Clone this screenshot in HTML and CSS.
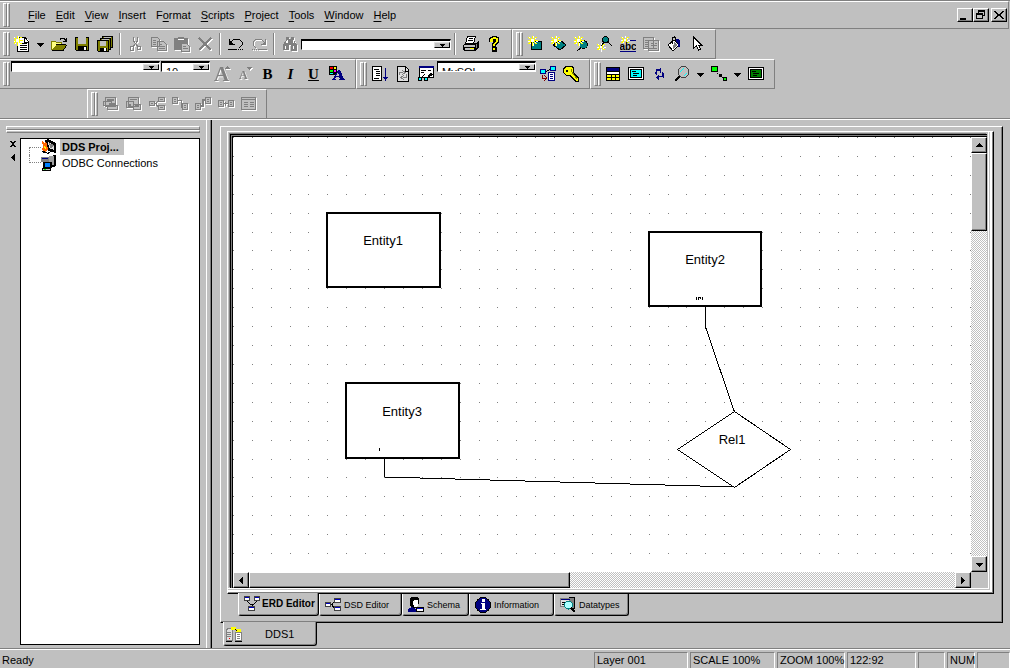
FILE: index.html
```html
<!DOCTYPE html>
<html lang="en">
<head>
<meta charset="utf-8">
<title>DDS1</title>
<link rel="stylesheet" href="styles.css">
</head>
<body>
<svg class="sprite" aria-hidden="true">
  <symbol id="star" viewBox="0 0 16 16"><path d="M0 1h2v1h1v1h1V0h1v3h1V2h1V1h2v1H8v1H7v1h3v1H7v1h1v1h1v1H7V7H6V6H5v4H4V6H3v1H2v1H0V7h1V6h1V5H0V4h2V3H1V2H0z" fill="#ff0"/><path d="M1 1h1v1H1zM5 0h1v2H5zM7 2h1v1H7zM3 3h3v3H3zM0 5h2v1H0zM8 5h2v1H8zM2 7h1v1H2zM5 7h1v3H5zM7 6h1v1H7z" fill="#fff"/></symbol>
  <symbol id="new" viewBox="0 0 16 16"><path d="M4 1h7l4 4v11H4z" fill="#fff"/><path d="M5 1.500h6l3.500 4v10h-11V8M10.500 2v4h4" fill="none" stroke="#000"/><path d="M8 7.500h5M6 9.500h7M6 11.500h7M6 13.500h7" stroke="#000"/><use href="#star" x="-1" y="0" width="16" height="16"/></symbol>
  <symbol id="open" viewBox="0 0 16 16"><path d="M0 5h4l1 1h6v3H5l-4 5H0z" fill="#ffff80"/><path d="M0.500 14V5.500h4l1 1h5V9" fill="none" stroke="#808000"/><path d="M1 14l4-5h11l-4 5z" fill="#808000"/><path d="M1 14.500h11l4-5.500M5 8.500h10" fill="none" stroke="#000"/><path d="M9 3.500l1-1h3l2 2M15.500 2v3H12" fill="none" stroke="#000"/></symbol>
  <symbol id="save" viewBox="0 0 16 16"><path d="M1 1h14v14H2l-1-1z" fill="#000"/><path d="M2 2h12v12H2z" fill="#808000"/><path d="M4 1h8v7H4z" fill="#c0c0c0"/><path d="M4 10h9v5H4z" fill="#000"/><path d="M10 11h2v3h-2z" fill="#fff"/></symbol>
  <symbol id="saveall" viewBox="0 0 16 16"><path d="M5 0h11v12H5z" fill="#000"/><path d="M6 1h9v10H6z" fill="#808000"/><path d="M7 1h7v3H7z" fill="#c0c0c0"/><path d="M3 2h11v12H3z" fill="#000"/><path d="M4 3h9v10H4z" fill="#808000"/><path d="M5 3h7v3H5z" fill="#c0c0c0"/><path d="M0 4h12v12H1l-1-1z" fill="#000"/><path d="M1 5h10v10H1z" fill="#808000"/><path d="M3 5h6v5H3z" fill="#c0c0c0"/><path d="M3 12h7v3H3z" fill="#000"/><path d="M7 12h2v3H7z" fill="#fff"/></symbol>
  <symbol id="cut" viewBox="0 0 16 16"><path d="M5.500 1v4l4 5M9.500 1v4l-4 5" fill="none" stroke="#808080"/><path d="M2.500 10.500h3v4h-3zM9.500 10.500h3v3h-3z" fill="none" stroke="#808080"/></symbol>
  <symbol id="copy" viewBox="0 0 16 16"><path d="M.5 1.500h6l2 2v7h-8zM6.500 5.500h6l3 3v6h-9z" fill="#c0c0c0" stroke="#808080"/><path d="M2 4.500h3M2 6.500h3M2 8.500h3M8 8.500h3M8 10.500h6M8 12.500h6" stroke="#808080"/></symbol>
  <symbol id="paste" viewBox="0 0 16 16"><path d="M0 2h4V1h6v1h4v12H0z" fill="#808080"/><path d="M4 3h6v1H4z" fill="#fff"/><path d="M7.500 7.500h5l3 3v5h-8z" fill="#c0c0c0" stroke="#808080"/><path d="M9 10.500h3M9 12.500h5" stroke="#808080"/></symbol>
  <symbol id="delete" viewBox="0 0 16 16"><path d="M2 2l12 12M14 2L2 14" stroke="#808080" stroke-width="2"/></symbol>
  <symbol id="undo" viewBox="0 0 16 16"><path d="M1.500 3v5h5M2 7l4-4h5l3 3v3l-3 3M0 13.500h9M10 13.500h1M12 13.500h1M14 13.500h1" fill="none" stroke="#000"/><path d="M1 4v5h5z"/></symbol>
  <symbol id="redo" viewBox="0 0 16 16"><path d="M14.500 3v5h-5M14 7l-4-4H5L2 6v3l3 3M7 13.500h9M5 13.500h1M3 13.500h1M1 13.500h1" fill="none" stroke="#808080"/><path d="M15 4v5h-5z" fill="#808080"/></symbol>
  <symbol id="find" viewBox="0 0 16 16"><path d="M4 1h3v2h2V1h3v3l3 5v6h-6V9H7v5H1V9l3-5z" fill="#808080"/><path d="M5 4h1v3H4zM11 4h1v3h-1zM3 10h1v3H3zM11 10h1v3h-1z" fill="#fff"/></symbol>
  <symbol id="print" viewBox="0 0 16 16"><path d="M3 7h10l3-2v7l-4 3H1l-1-2V9z" fill="#000"/><path d="M4.500 .5h8l-2 7h-8z" fill="#fff" stroke="#000"/><path d="M6 2.500h4M5 4.500h5" stroke="#000"/><path d="M1 9h11v2H1zM2 12h9v2H2z" fill="#c0c0c0"/><path d="M13 8h1v4h-1z" fill="#808080"/><path d="M7 12h4v1H7z" fill="#ff0"/></symbol>
  <symbol id="help" viewBox="0 0 16 16"><path d="M4 1h2V0h5v1h2v6h-1v1h-1v1h-1v2H6V7h1V6H3V2h1zM6 11h5v5H6z"/><path d="M5 2h2V1h3v1h2v4h-1v1h-1v1H9v2H7V8h1V7h1V6h1V3H7v3H4V3h1zM7 12h2v2H7z" fill="#ff0"/></symbol>
  <symbol id="entity" viewBox="0 0 16 16"><path d="M3.500 5.500h10v8h-10z" fill="#008080" stroke="#000"/><use href="#star" width="16" height="16" x="0" y="0"/></symbol>
  <symbol id="relation" viewBox="0 0 16 16"><path d="M2 9l7-5 6 5-6 5z" fill="#008080" stroke="#000"/><use href="#star" width="16" height="16"/></symbol>
  <symbol id="attribute" viewBox="0 0 16 16"><path d="M3 15l6-5" stroke="#000"/><circle cx="9.500" cy="8.500" r="4" fill="#008080" stroke="#000"/><use href="#star" width="16" height="16"/></symbol>
  <symbol id="link" viewBox="0 0 16 16"><path d="M8 4L4 11M9 4l6 6" stroke="#000"/><circle cx="8.500" cy="3.500" r="3" fill="#008080" stroke="#000"/><use href="#star" x="0" y="7" width="14" height="14"/></symbol>
  <symbol id="abc" viewBox="0 0 16 16"><path d="M8 4.500h8M0 15.500h16" stroke="#000080"/><use href="#star" x="1" width="14" height="14"/><text x="8" y="14" class="abc">abc</text></symbol>
  <symbol id="pages" viewBox="0 0 16 16"><path d="M.5 1.500h10v11H.5zM5.500 4.500h10v10h-10z" fill="#c0c0c0" stroke="#808080"/><path d="M2 4.500h7M2 6.500h4M2 8.500h3M2 10.500h3M8 7.500h2M12 7.500h2M8 9.500h6M8 12.500h6" stroke="#808080"/></symbol>
  <symbol id="bucket" viewBox="0 0 16 16"><path d="M2 9l6-5 5 5-6 6z" fill="#fff" stroke="#000"/><path d="M8 6l4 3-5 4z" fill="#808080"/><path d="M6.500 8V2l2-1 1 1v3" fill="none" stroke="#000"/><path d="M10 3h2l2 2v6h-2V8l-2-2z" fill="#000080"/></symbol>
  <symbol id="pointer" viewBox="0 0 16 16"><path d="M4.500 1v11l3-2 2 4 2-1-2-4h3z" fill="#fff" stroke="#000"/></symbol>
  <symbol id="grow" viewBox="0 0 16 16"><text x="0" y="15" class="serif-a">A</text><path d="M11 3l2.500-3L16 3z" fill="#808080"/></symbol>
  <symbol id="shrink" viewBox="0 0 16 16"><text x="2" y="13" class="serif-b">A</text><path d="M10 1h5l-2.500 3z" fill="#808080"/></symbol>
  <symbol id="color" viewBox="0 0 16 16"><path d="M0 0h8v9H0z"/><path d="M1 1h3v2H1z" fill="red"/><path d="M5 1h2v2H5z" fill="#ff0"/><path d="M1 4h3v2H1z" fill="#0f0"/><path d="M5 4h2v2H5z" fill="#f0f"/><path d="M1 7h3v1H1z" fill="#0ff"/><path d="M9 4h2l4 9h1v1h-6v-1h1l-1-2H7l-1 2h1v1H3v-1h1zM9 6l-2 4h3z" fill="#000080" fill-rule="evenodd"/></symbol>
  <symbol id="sort" viewBox="0 0 16 16"><path d="M.5.5h9v14h-9z" fill="#fff" stroke="#000"/><path d="M2 3.500h5M4 5.500h4M4 7.500h4M4 9.500h4M2 12.500h5" stroke="#000"/><path d="M13 2h1v9h2l-2.500 4-2.500-4h2z" fill="#000080"/></symbol>
  <symbol id="refresh" viewBox="0 0 16 16"><path d="M2.500.5h8l3 3v12h-11z" fill="#dfdfdf" stroke="#000"/><path d="M10 1v4h4" fill="none" stroke="#000"/><path d="M4.500 9V6.500H8M7 4l3 2.500L7 9M11.500 8v3H8M9 9l-3 2.500L9 14" fill="none" stroke="#808080"/></symbol>
  <symbol id="preview" viewBox="0 0 16 16"><path d="M1.500.5h14v11h-14z" fill="#fff" stroke="#000"/><path d="M1 0h15v2H1z" fill="#000080"/><path d="M3 4.500h5M3 6.500h3M10 4.500h3M3 12l4-4M9 12l4-5 2 2" stroke="#000"/><path d="M.5 11.500h3v3h-3zM6.500 11.500h3v3h-3z" fill="#0ff" stroke="#000"/></symbol>
  <symbol id="generate" viewBox="0 0 16 16"><path d="M5 6l6-3" stroke="#000"/><path d="M.5 3.500h5v4h-5zM10.500.5h5v4h-5z" fill="#0ff" stroke="#000080"/><path d="M8.500 6.500h6v8h-6z" fill="#fff" stroke="#000080"/><path d="M10 8.500h3M10 10.500h3M10 12.500h3" stroke="#000080"/><path d="M2.500 9v3h4M4 9l3 3-3 3" fill="none" stroke="#800000"/></symbol>
  <symbol id="key" viewBox="0 0 16 16"><path d="M2 0h7l2 2v4l5 6v4h-4l-2-2-3-4H3L0 7V3z" fill="#000"/><path d="M3 1h5l2 2v4l5 6v2h-2L8 9H4L1 7V4z" fill="#ff0"/><path d="M8 3l1 3 5 7" fill="none" stroke="#808000"/><path d="M3 4h2v2H3z"/></symbol>
  <symbol id="table" viewBox="0 0 16 16"><path d="M1 1h14v14H1z" fill="#000"/><path d="M2 2h12v3H2z" fill="#000080"/><path d="M2 6h12v2H2z" fill="#fff"/><path d="M2 9h12v5H2z" fill="#ff0"/><path d="M2 11.500h12M6 9v5M10 9v5" stroke="#000"/></symbol>
  <symbol id="screen" viewBox="0 0 16 16"><path d="M.5 1.500h15v12H.5z" fill="#fff" stroke="#000"/><path d="M2.500 3.500h11v8h-11z" fill="#0ff" stroke="#000"/><path d="M4 5.500h4M5 7.500h6M5 9.500h4" stroke="#000"/></symbol>
  <symbol id="screen2" viewBox="0 0 16 16"><path d="M.5 1.500h15v12H.5z" fill="#fff" stroke="#000"/><path d="M2.500 3.500h11v8h-11z" fill="#008000" stroke="#000"/><path d="M4 5.500h4M5 7.500h6M5 9.500h4" stroke="#000"/></symbol>
  <symbol id="cycle" viewBox="0 0 16 16"><path d="M5 3h4V2h1v5H9V5H6v4H5V8H4V6h1zM11 6h1v1h1v5h-1v-1H8v3H7v-1H6v-1H5v-1h1v-1h1V9h1v1h3z" fill="#000080"/></symbol>
  <symbol id="zoom" viewBox="0 0 16 16"><path d="M1 15l5-5" stroke="#000" stroke-width="2"/><circle cx="9.500" cy="6" r="5.500" fill="#c0c0c0" stroke="#404040"/><path d="M6 6l4-4M10 10l3-3" stroke="#0ff"/></symbol>
  <symbol id="nodes" viewBox="0 0 16 16"><path d="M.5.500h6v5h-6z" fill="#0f0" stroke="#000"/><path d="M6 7h1v1H6zM8 8h3v3H8zM11 11h1v1h-1z"/><path d="M12.500 11.500h3v3h-3z" fill="#0f0" stroke="#000"/></symbol>
  <symbol id="stack1" viewBox="0 0 16 16"><path d="M2.500 1.500h10v9h-10zM.5 5.500h8v4h-8zM4.500 9.500h10v4h-10z" fill="#c0c0c0" stroke="#808080"/><path d="M4 3h7v2H4zM6 7h6v3H6z" fill="#808080"/></symbol>
  <symbol id="stack2" viewBox="0 0 16 16"><path d="M2.500 1.500h10v9h-10zM.5 5.500h7v6h-7zM7.500 8.500h7v5h-7z" fill="#c0c0c0" stroke="#808080"/><path d="M4 3h7v1H4zM2 8h3v2H2zM9 8h4v3H9z" fill="#808080"/></symbol>
  <symbol id="tree1" viewBox="0 0 16 16"><path d="M5 7.500h2l3-4M7 8l3 4" fill="none" stroke="#808080"/><path d="M.5 5.500h5v4h-5zM9.500 1.500h6v4h-6zM9.500 9.500h6v4h-6z" fill="#c0c0c0" stroke="#808080"/><path d="M2 7.500h2M11 3.500h3M11 11.500h3" stroke="#808080"/></symbol>
  <symbol id="down" viewBox="0 0 16 16"><path d="M6 4h3v7h2" fill="none" stroke="#808080"/><path d="M.5 1.500h5v6h-5zM10.500 7.500h5v6h-5z" fill="#c0c0c0" stroke="#808080"/><path d="M2 3.500h2M2 5.500h2M12 9.500h2M12 11.500h2" stroke="#808080"/></symbol>
  <symbol id="up" viewBox="0 0 16 16"><path d="M5 10h3V4h2" fill="none" stroke="#808080" stroke-width="2"/><path d="M.5 7.500h5v6h-5zM10.500 1.500h5v6h-5z" fill="#c0c0c0" stroke="#808080"/><path d="M2 9.500h2M2 11.500h2M12 3.500h2M12 5.500h2" stroke="#808080"/></symbol>
  <symbol id="side" viewBox="0 0 16 16"><path d="M5 7.500h6M7.500 6v4" stroke="#808080"/><path d="M.5 4.500h5v6h-5zM10.500 4.500h5v6h-5z" fill="#c0c0c0" stroke="#808080"/><path d="M2 6.500h2M2 8.500h2M12 6.500h2M12 8.500h2" stroke="#808080"/></symbol>
  <symbol id="list" viewBox="0 0 16 16"><path d="M.5 1.500h14v12H.5z" fill="#c0c0c0" stroke="#808080"/><path d="M0 3h15M3 6.500h4M9 6.500h4M3 8.500h4M9 8.500h4M3 10.500h4M9 10.500h4" stroke="#808080"/></symbol>
  <symbol id="erd" viewBox="0 0 16 16"><path d="M3 5l3 3h4l3-3M8 8v3" fill="none" stroke="#000"/><path d="M.5.5h5v4h-5zM10.500.5h5v4h-5zM4.500 10.500h6v4h-6z" fill="#fff" stroke="#404040"/><path d="M1 1h4v1H1zM11 1h4v1h-4zM5 11h5v1H5z" fill="#0000c0"/></symbol>
  <symbol id="dsd" viewBox="0 0 16 16"><path d="M5 7.500h2l3-4M7 8l3 4" fill="none" stroke="#000"/><path d="M.5 5.500h5v4h-5zM9.500 1.500h6v4h-6zM9.500 9.500h6v4h-6z" fill="#fff" stroke="#404040"/><path d="M1 6h4v1H1zM10 2h5v1h-5zM10 10h5v1h-5z" fill="#0000c0"/></symbol>
  <symbol id="schema" viewBox="0 0 16 16"><path d="M2 1l2-1h5l2 2v4l-2 4-2 1H4L2 9z"/><path d="M6 3h4v5l-2 2H6L5 6z" fill="#fff"/><path d="M0 15v-3l4-2 4 2v3z" fill="#000080"/><path d="M8.500 10.500h7v4h-7z" fill="#fff" stroke="#000"/><path d="M9 11h6v1H9z" fill="#0000c0"/></symbol>
  <symbol id="info" viewBox="0 0 16 16"><circle cx="8" cy="8" r="7.500" fill="#000080" stroke="#000"/><path d="M7 2h3v3H7zM6 6h4v6h1v1H5v-1h2V7H6z" fill="#fff"/></symbol>
  <symbol id="types" viewBox="0 0 16 16"><path d="M9.500.5h5v11h-5z" fill="#808080" stroke="#000"/><path d="M.5 1.500h9v8h-9z" fill="#dfdfdf" stroke="#808080"/><path d="M1 2h9v1H1z" fill="#000080"/><path d="M2 5.500h3M2 7.500h3" stroke="#000"/><circle cx="8.500" cy="8" r="4" fill="#aff" stroke="#008080"/><path d="M11 11l4 4" stroke="#000" stroke-width="2"/></symbol>
  <symbol id="project" viewBox="0 0 16 16"><path d="M4 1l3-1 8 4v10l-8-2z"/><path d="M7 3l6 3v5L8 9z" fill="#dfdfdf"/><path d="M8 4l5 2-3 4z" fill="#808080"/><path d="M1 2l3 3 1-3 2 8-2 3-4-2 1-3z" fill="#f60"/><path d="M3 7l2 1v3L3 9z" fill="#ff0"/><path d="M1 12l3 1M2 14l4-1M6 15l3-2" stroke="#000"/></symbol>
  <symbol id="odbc" viewBox="0 0 16 16"><path d="M9 1l6-1v10l-2 2H8z"/><path d="M8 1h5v9H8z" fill="#a0a0a0"/><path d="M0 2h8v5H0z" fill="#808080"/><path d="M1 3h6v1H1z" fill="#000080"/><path d="M2 7h9v6H2z"/><path d="M4 8h5v4H4z" fill="#0080ff"/><path d="M1 13h9v3H1z" fill="#000"/><path d="M2 14h7v1H2z" fill="#c0c0c0"/><path d="M3 14h2v1H3z" fill="#0f0"/></symbol>
  <symbol id="server" viewBox="0 0 16 16"><path d="M.5 3.500l2-1h4v12h-6z" fill="#dfdfdf" stroke="#808080"/><path d="M1 6.500h4M1 8.500h4M1 10.500h4" stroke="#808080"/><path d="M3 12h1v1H3z" fill="red"/><path d="M9.500 6.500h6v8h-6z" fill="#fff" stroke="#808080"/><path d="M11 8.500h3M11 10.500h3M11 12.500h3" stroke="#808080"/><path d="M5 1h5v2h5v3h-5V4H5z" fill="#ff0"/><path d="M9 3l2 2M0 15.500h6M9 15.500h7" stroke="#000"/></symbol>
  <symbol id="ax" viewBox="0 0 8 8"><path d="M1 3h7v1H1zM2 4h5v1H2zM3 5h3v1H3zM4 6h1v1H4z"/></symbol>
  <symbol id="as" viewBox="0 0 8 8"><path d="M2 3h5v1H2zM3 4h3v1H3zM4 5h1v1H4z"/></symbol>
  <symbol id="au" viewBox="0 0 8 8"><path d="M4 2h1v1H4zM3 3h3v1H3zM2 4h5v1H2zM1 5h7v1H1z"/></symbol>
  <symbol id="al" viewBox="0 0 8 8"><path d="M2 4h1v1H2zM3 3h1v3H3zM4 2h1v5H4zM5 1h1v7H5z"/></symbol>
  <symbol id="ar" viewBox="0 0 8 8"><path d="M5 4h1v1H5zM4 3h1v3H4zM3 2h1v5H3zM2 1h1v7H2z"/></symbol>
</svg>

<header>
  <nav class="menubar">
    <i class="grip"></i>
    <div class="menus">
      <button><u>F</u>ile</button><button><u>E</u>dit</button><button><u>V</u>iew</button><button><u>I</u>nsert</button><button>F<u>o</u>rmat</button><button><u>S</u>cripts</button><button><u>P</u>roject</button><button><u>T</u>ools</button><button><u>W</u>indow</button><button><u>H</u>elp</button>
    </div>
    <div class="winbuttons">
      <button aria-label="Minimize"><svg viewBox="0 0 12 12"><path d="M1 9h6v2H1z"/></svg></button>
      <button aria-label="Restore"><svg viewBox="0 0 12 12"><path d="M3 1h7v6H8V6h1V3H4v1H3zM1 4h7v6H1zM2 6v3h5V6z" fill-rule="evenodd"/></svg></button>
      <button class="close" aria-label="Close"><svg viewBox="0 0 12 12"><path d="M1 2h2v1h1v1h1v1h2V4h1V3h1V2h2v1h-1v1H9v1H8v2h1v1h1v1h1v1H9V9H8V8H7V7H5v1H4v1H3v1H1V9h1V8h1V7h1V5H3V4H2V3H1z"/></svg></button>
    </div>
  </nav>

  <div class="row">
    <div class="band wide-standard">
      <i class="grip"></i>
      <button class="tool" aria-label="New"><svg><use href="#new"/></svg></button>
      <button class="drop" aria-label="New options"><svg><use href="#ax"/></svg></button>
      <button class="tool" aria-label="Open"><svg><use href="#open"/></svg></button>
      <button class="tool" aria-label="Save"><svg><use href="#save"/></svg></button>
      <button class="tool" aria-label="Save all"><svg><use href="#saveall"/></svg></button>
      <i class="sep"></i>
      <button class="tool off" aria-label="Cut"><svg><use href="#cut"/></svg></button>
      <button class="tool off" aria-label="Copy"><svg><use href="#copy"/></svg></button>
      <button class="tool off" aria-label="Paste"><svg><use href="#paste"/></svg></button>
      <button class="tool off" aria-label="Delete"><svg><use href="#delete"/></svg></button>
      <i class="sep"></i>
      <button class="tool" aria-label="Undo"><svg><use href="#undo"/></svg></button>
      <button class="tool off" aria-label="Redo"><svg><use href="#redo"/></svg></button>
      <i class="sep"></i>
      <button class="tool off" aria-label="Find"><svg><use href="#find"/></svg></button>
      <label class="combo combo-find"><select aria-label="Find text"><option></option></select><i class="knob"><svg><use href="#as"/></svg></i></label>
      <i class="sep"></i>
      <button class="tool" aria-label="Print"><svg><use href="#print"/></svg></button>
      <button class="tool" aria-label="Help"><svg><use href="#help"/></svg></button>
    </div>
    <div class="band wide-insert">
      <i class="grip"></i>
      <button class="tool" aria-label="Entity"><svg><use href="#entity"/></svg></button>
      <button class="tool" aria-label="Relationship"><svg><use href="#relation"/></svg></button>
      <button class="tool" aria-label="Attribute"><svg><use href="#attribute"/></svg></button>
      <button class="tool" aria-label="Link"><svg><use href="#link"/></svg></button>
      <button class="tool" aria-label="Label"><svg><use href="#abc"/></svg></button>
      <button class="tool off" aria-label="Pages"><svg><use href="#pages"/></svg></button>
      <button class="tool" aria-label="Fill"><svg><use href="#bucket"/></svg></button>
      <button class="tool" aria-label="Select"><svg><use href="#pointer"/></svg></button>
    </div>
  </div>

  <div class="row">
    <div class="band wide-font">
      <i class="grip"></i>
      <label class="combo high combo-font"><select aria-label="Font"><option></option></select><i class="knob"><svg><use href="#as"/></svg></i></label>
      <label class="combo high combo-size"><select aria-label="Font size"><option>10</option></select><i class="knob"><svg><use href="#as"/></svg></i></label>
      <button class="tool off" aria-label="Grow font"><svg><use href="#grow"/></svg></button>
      <button class="tool off" aria-label="Shrink font"><svg><use href="#shrink"/></svg></button>
      <button class="tool letter"><b>B</b></button>
      <button class="tool letter"><b><em>I</em></b></button>
      <button class="tool letter"><b><u>U</u></b></button>
      <button class="tool" aria-label="Font colour"><svg><use href="#color"/></svg></button>
    </div>
    <div class="band wide-data">
      <i class="grip"></i>
      <button class="tool" aria-label="Sort"><svg><use href="#sort"/></svg></button>
      <button class="tool" aria-label="Refresh"><svg><use href="#refresh"/></svg></button>
      <button class="tool" aria-label="Preview"><svg><use href="#preview"/></svg></button>
      <label class="combo high combo-db"><select aria-label="Database"><option>MySQL</option></select><i class="knob"><svg><use href="#as"/></svg></i></label>
      <button class="tool" aria-label="Generate"><svg><use href="#generate"/></svg></button>
      <button class="tool" aria-label="Key"><svg><use href="#key"/></svg></button>
    </div>
    <div class="band wide-view">
      <i class="grip"></i>
      <button class="tool" aria-label="Table"><svg><use href="#table"/></svg></button>
      <button class="tool" aria-label="Screen"><svg><use href="#screen"/></svg></button>
      <button class="tool" aria-label="Cycle"><svg><use href="#cycle"/></svg></button>
      <button class="tool" aria-label="Zoom"><svg><use href="#zoom"/></svg></button>
      <button class="drop" aria-label="Zoom options"><svg><use href="#ax"/></svg></button>
      <button class="tool" aria-label="Nodes"><svg><use href="#nodes"/></svg></button>
      <button class="drop" aria-label="Node options"><svg><use href="#ax"/></svg></button>
      <button class="tool" aria-label="Full screen"><svg><use href="#screen2"/></svg></button>
    </div>
  </div>

  <div class="row last">
    <div class="band wide-layout">
      <i class="grip"></i>
      <button class="tool off" aria-label="Bring to front"><svg><use href="#stack1"/></svg></button>
      <button class="tool off" aria-label="Send to back"><svg><use href="#stack2"/></svg></button>
      <button class="tool off" aria-label="Tree"><svg><use href="#tree1"/></svg></button>
      <button class="tool off" aria-label="Step down"><svg><use href="#down"/></svg></button>
      <button class="tool off" aria-label="Step up"><svg><use href="#up"/></svg></button>
      <button class="tool off" aria-label="Side by side"><svg><use href="#side"/></svg></button>
      <button class="tool off" aria-label="List"><svg><use href="#list"/></svg></button>
    </div>
  </div>
</header>

<main>
  <aside>
    <div class="hgrip"></div>
    <div class="dock">
      <div class="dockbuttons">
        <button aria-label="Close panel"><svg viewBox="0 0 8 8"><path d="M1 1h2v1h2V1h2v1H6v1H5v2h1v1h1v1H5V6H3v1H1V6h1V5h1V3H2V2H1z"/></svg></button>
        <button aria-label="Collapse panel"><svg><use href="#al"/></svg></button>
      </div>
      <ul class="tree">
        <li><i class="branch"></i><svg><use href="#project"/></svg><b>DDS Proj...</b></li>
        <li><i class="branch end"></i><svg><use href="#odbc"/></svg><span>ODBC Connections</span></li>
      </ul>
    </div>
  </aside>

  <section class="workspace">
    <div class="outer">
      <div class="inner">
        <div class="frame">
          <svg class="canvas" role="img" aria-label="Entity relationship diagram">
            <defs><pattern id="dots" x="75" y="113" width="189" height="227" patternUnits="userSpaceOnUse">
              <path d="M0 .5h189M0 19.500h189M0 38.500h189M0 57.500h189M0 76.500h189M0 95.500h189M0 114.500h189M0 133.500h189M0 152.500h189M0 171.500h189M0 190.500h189M0 209.500h189" stroke="#808080" stroke-dasharray="1 18 1 18 1 18 1 18 1 18 1 18 1 18 1 18 1 18 1 17"/>
            </pattern></defs>
            <rect width="100%" height="100%" fill="url(#dots)"/>
            <g fill="#fff" stroke="#000">
              <path d="M472.500 170v20l29 85M151.500 322v18l350 10" fill="none"/>
              <path d="M501.500 274.500l56 38-56 38-57-38z"/>
              <g stroke-width="2">
                <rect x="94" y="76" width="113" height="74"/>
                <rect x="416" y="95" width="112" height="74"/>
                <rect x="113" y="246" width="113" height="75"/>
              </g>
            </g>
            <path d="M146 311h1v3h-1zM463 160h1v3h-1zM465 160h3v1h-3zM465 161h1v2h-1zM467 161h1v1h-1zM469 160h1v3h-1z"/>
            <g class="names"><text x="150" y="108">Entity1</text><text x="472" y="127">Entity2</text><text x="169" y="279">Entity3</text><text x="499" y="307">Rel1</text></g>
          </svg>
          <div class="vbar"><button aria-label="Scroll up"><svg><use href="#au"/></svg></button><div class="thumb"></div><button aria-label="Scroll down"><svg><use href="#ax"/></svg></button></div>
          <div class="hbar"><button aria-label="Scroll left"><svg><use href="#al"/></svg></button><div class="thumb"></div><button aria-label="Scroll right"><svg><use href="#ar"/></svg></button></div>
        </div>
      </div>
      <div class="tabs">
        <button class="tab tab-erd active"><svg><use href="#erd"/></svg>ERD Editor</button>
        <button class="tab tab-dsd"><svg><use href="#dsd"/></svg>DSD Editor</button>
        <button class="tab tab-schema"><svg><use href="#schema"/></svg>Schema</button>
        <button class="tab tab-info"><svg><use href="#info"/></svg>Information</button>
        <button class="tab tab-types"><svg><use href="#types"/></svg>Datatypes</button>
      </div>
    </div>
    <div class="doctabs"><button class="doctab"><svg><use href="#server"/></svg><span>DDS1</span></button></div>
  </section>
</main>

<footer>
  <span class="ready">Ready</span>
  <span class="cell c-layer">Layer 001</span>
  <span class="cell c-scale">SCALE 100%</span>
  <span class="cell c-zoom">ZOOM 100%</span>
  <span class="cell c-pos">122:92</span>
  <span class="cell c-blank"></span>
  <span class="cell c-num">NUM</span>
  <span class="cell c-end"></span>
</footer>
</body>
</html>
```
FILE: styles.css
```css
* { box-sizing: border-box; }
body {
  margin: 0;
  min-height: 100vh;
  display: flex;
  flex-direction: column;
  background: #c0c0c0;
  color: #000;
  font: 11px/14px "Liberation Sans", Arial, sans-serif;
}
button, select { font: inherit; color: inherit; background: none; border: 0; padding: 0; margin: 0; }
svg { width: 16px; height: 16px; flex: none; display: block; shape-rendering: crispEdges; }
.sprite { position: absolute; width: 0; height: 0; }
.abc { font: bold 10px "Liberation Sans", sans-serif; text-anchor: middle; }
.serif-a { font: bold 21px "Liberation Serif", serif; fill: #808080; }
.serif-b { font: bold 12px "Liberation Serif", serif; fill: #808080; }

/* menu and toolbars */
header { border-top: 1px solid #808080; border-bottom: 1px solid #808080; }
.menubar {
  display: flex;
  align-items: center;
  height: 28px;
  margin-right: 1px;
  border: solid #808080;
  border-width: 1px 1px 1px 0;
  border-top-color: #fff;
}
.grip { flex: none; width: 7px; height: 24px; margin: 0 0 0 3px; display: flex; justify-content: space-between; }
.grip::before, .grip::after { content: ""; width: 3px; background: #c0c0c0; border-left: 1px solid #fff; border-right: 1px solid #808080; border-top: 1px solid #fff; border-bottom: 1px solid #808080; }
.menus { flex: 1; display: flex; gap: 10px; padding-left: 18px; }
.menus u { text-underline-offset: 2px; }
.winbuttons { display: flex; padding-right: 1px; }
.winbuttons button { width: 16px; height: 14px; display: flex; align-items: center; justify-content: center; border: 1px solid #fff; border-right-color: #000; border-bottom-color: #000; box-shadow: inset -1px -1px #808080; }
.winbuttons .close { margin-left: 2px; }
.winbuttons svg { width: 12px; height: 12px; }
.row { display: flex; }
.row.last { padding-left: 87px; }
.band { display: flex; align-items: center; height: 30px; border: 1px solid #fff; border-right-color: #808080; border-bottom-color: #808080; }
.row .band:first-child { border-left: 0; }
.row.last .band { height: 29px; border-left: 1px solid #fff; border-bottom: 0; }
.wide-standard { width: 512px; }
.wide-insert { width: 204px; }
.wide-font { width: 356px; }
.wide-data { width: 234px; }
.wide-view { width: 185px; }
.wide-layout { width: 180px; }
.tool { width: 23px; height: 24px; display: flex; align-items: center; justify-content: center; flex: none; }
.off svg { filter: drop-shadow(1px 1px 0 #fff); }
.drop { flex: none; width: 14px; height: 22px; display: flex; align-items: center; justify-content: center; }
.drop svg, .knob svg, .vbar svg, .hbar svg, .dockbuttons svg { width: 8px; height: 8px; }
.sep { flex: none; width: 2px; height: 22px; margin: 0 3px; border-left: 1px solid #808080; border-right: 1px solid #fff; }
.letter { font: 15px/20px "Liberation Serif", serif; }
.combo { position: relative; flex: none; height: 11px; overflow: hidden; background: #fff; border: 1px solid #fff; border-top: 2px solid #000; border-left: 1px solid #000; }
.combo.high { align-self: flex-start; margin-top: 1px; }
.combo select { display: block; width: 100%; height: 18px; padding: 0 0 0 4px; appearance: none; line-height: 14px; outline: 0; }
.knob { position: absolute; right: 0; top: 1px; width: 16px; height: 6px; display: flex; align-items: center; justify-content: center; background: #c0c0c0; border: 1px solid #dfdfdf; border-right-color: #000; border-bottom-color: #000; overflow: hidden; }
.combo-find { width: 150px; }
.combo-font { width: 149px; margin-left: 1px; }
.combo-size { width: 49px; margin-left: 1px; }
.combo-db { width: 99px; }
.wide-data .grip, .wide-insert .grip, .wide-layout .grip { margin-right: 1px; }

/* project panel */
main { flex: 1; display: flex; border-top: 1px solid #fff; }
aside { flex: none; width: 212px; display: flex; flex-direction: column; padding: 6px 5px 3px 6px; border-right: 1px solid #000; box-shadow: inset -1px 0 #808080, inset -4px 0 #c0c0c0, inset -5px 0 #fff; }
.hgrip { height: 7px; width: 194px; display: flex; flex-direction: column; justify-content: space-between; }
.hgrip::before, .hgrip::after { content: ""; height: 3px; border: 1px solid #fff; border-right-color: #808080; border-bottom-color: #808080; }
.dock { flex: 1; display: flex; margin-top: 5px; }
.dockbuttons { width: 14px; padding: 2px 0 0 3px; display: flex; flex-direction: column; gap: 5px; }
.tree { width: 180px; margin: 0; padding: 0; list-style: none; background: #fff; border: 1px solid #000; }
.tree li { display: flex; height: 16px; align-items: center; }
.tree b { background: #c0c0c0; padding: 1px 5px 1px 2px; margin-left: 3px; }
.tree span { padding-left: 5px; }
.branch { width: 12px; height: 8px; margin-left: 8px; align-self: flex-end; border: dotted #808080; border-width: 1px 0 0 1px; }
.branch.end { align-self: flex-start; border-width: 0 0 1px 1px; }

/* diagram window */
.workspace { flex: 1; min-width: 0; display: flex; flex-direction: column; padding: 6px 7px 2px 8px; }
.outer { flex: 1; display: flex; flex-direction: column; padding: 4px 8px 6px 6px; border: 1px solid #fff; border-right-color: #000; border-bottom-color: #000; box-shadow: inset -1px -1px #808080; }
.inner { flex: 1; display: flex; padding: 2px 6px 5px 2px; border: 1px solid #fff; border-right-color: #000; border-bottom-color: #000; box-shadow: inset -1px -1px #808080, inset -3px -3px #fff, inset -4px -4px #c0c0c0, inset -5px -5px #fff; }
.frame { flex: 1; display: grid; grid-template-columns: 1fr 16px; grid-template-rows: 1fr 16px; padding: 3px 0 0 3px; box-shadow: inset 1px 1px #000, inset 2px 2px #808080, inset 3px 3px #000, -1px -1px #808080; }
.canvas { width: 100%; height: 100%; min-height: 0; background: #fff; }
.names { font: 13px "Liberation Sans", Arial, sans-serif; text-anchor: middle; }
.vbar, .hbar { display: flex; background: repeating-conic-gradient(#fff 0 25%, #c0c0c0 0 50%) 0 0 / 2px 2px; }
.vbar { flex-direction: column; }
.vbar > *, .hbar > * { flex: none; background: #c0c0c0; border: 1px solid #fff; border-right-color: #000; border-bottom-color: #000; box-shadow: inset -1px -1px #808080; display: flex; align-items: center; justify-content: center; }
.vbar button, .hbar button { width: 16px; height: 16px; }
.vbar button:last-child { margin-top: auto; }
.hbar button:last-child { margin-left: auto; }
.vbar .thumb { height: 78px; }
.hbar .thumb { width: 321px; }
.tabs { display: flex; padding-left: 11px; }
.tab { height: 22px; display: flex; align-items: center; gap: 3px; padding: 0 0 0 5px; border: solid #000; border-width: 0 1px 1px 1px; border-left-color: #fff; border-radius: 0 0 3px 3px; box-shadow: inset -1px -1px #808080; font-size: 9px; white-space: nowrap; }
.tab.active { font-weight: bold; font-size: 10px; gap: 2px; background: #c0c0c0; margin-top: -1px; height: 23px; }
.tab-erd { width: 81px; }
.tab-dsd { width: 83px; }
.tab-schema { width: 67px; }
.tab-info { width: 85px; }
.tab-types { width: 75px; }
.doctabs { display: flex; padding-left: 3px; margin-top: -1px; }
.doctab { width: 94px; height: 24px; display: flex; align-items: center; padding-left: 2px; background: #c0c0c0; border: solid #000; border-width: 0 1px 1px 1px; border-left-color: #fff; border-radius: 0 0 3px 3px; box-shadow: inset -1px -1px #808080; }
.doctab span { padding-left: 23px; }

/* status bar */
footer { display: flex; height: 20px; border-top: 1px solid #808080; padding-top: 3px; gap: 2px; box-shadow: inset 0 1px #fff; }
.ready { flex: 1; padding: 1px 2px; }
.cell { flex: none; border: 1px solid #808080; border-right-color: #fff; border-bottom: 0; padding: 0 2px; white-space: nowrap; }
.c-layer { width: 94px; }
.c-scale { width: 85px; }
.c-zoom { width: 68px; }
.c-pos { width: 69px; }
.c-blank { width: 27px; }
.c-num { width: 28px; }
.c-end { width: 33px; }
```
